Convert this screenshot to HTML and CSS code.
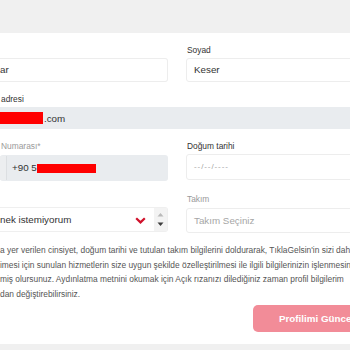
FILE: index.html
```html
<!DOCTYPE html>
<html lang="tr">
<head>
<meta charset="utf-8">
<title>Profil</title>
<link rel="stylesheet" href="styles.css">
</head>
<body>
<div class="topbar"></div>
<main class="form">
  <div class="row">
    <div class="field">
      <label class="lbl">&nbsp;</label>
      <div class="input clip">ar</div>
    </div>
    <div class="field">
      <label class="lbl">Soyad</label>
      <div class="input">Keser</div>
    </div>
  </div>

  <div class="field full">
    <label class="lbl">adresi</label>
    <div class="input disabled email clip"><span class="redact email-redact"></span>.com</div>
  </div>

  <div class="row row-mid">
    <div class="field">
      <label class="lbl muted">Numarası*</label>
      <div class="input disabled phone">
        <span class="prefix"></span>
        <span class="phone-num">+90 5<span class="redact phone-redact"></span></span>
      </div>
    </div>
    <div class="field">
      <label class="lbl">Doğum tarihi</label>
      <div class="input date placeholder">--/--/----</div>
    </div>
  </div>

  <div class="row row-mid">
    <div class="field">
      <label class="lbl">&nbsp;</label>
      <div class="select">
        <span class="select-text">nek istemiyorum</span>
        <svg class="chevron" width="11" height="7" viewBox="0 0 11 7"><path d="M1.2 1.2 L5.5 5.4 L9.8 1.2" fill="none" stroke="#d0112b" stroke-width="2.2"/></svg>
        <span class="spinner">
          <svg width="7" height="5" viewBox="0 0 7 5"><path d="M0.5 4.5 L3.5 1 L6.5 4.5 Z" fill="#b9b9b9"/></svg>
          <svg width="7" height="5" viewBox="0 0 7 5"><path d="M0.5 0.5 L3.5 4 L6.5 0.5 Z" fill="#3d3d3d"/></svg>
        </span>
      </div>
    </div>
    <div class="field">
      <label class="lbl muted">Takım</label>
      <div class="input team placeholder">Takım Seçiniz</div>
    </div>
  </div>

  <p class="note">a yer verilen cinsiyet, doğum tarihi ve tutulan takım bilgilerini doldurarak, TıklaGelsin'in sizi daha<br>imesi için sunulan hizmetlerin size uygun şekilde özelleştirilmesi ile ilgili bilgilerinizin işlenmesine<br>miş olursunuz. Aydınlatma metnini okumak için Açık rızanızı dilediğiniz zaman profil bilgilerim<br>dan değiştirebilirsiniz.</p>

  <div class="actions">
    <button class="btn" type="button">Profilimi Güncelle</button>
  </div>
</main>
<div class="bottombar"></div>
</body>
</html>
```

FILE: styles.css
```css
html, body {
  margin: 0;
  padding: 0;
  width: 350px;
  height: 350px;
  overflow: hidden;
  background: #ffffff;
}
body {
  font-family: "Liberation Sans", Arial, sans-serif;
  color: #333333;
}
.topbar {
  height: 33px;
  background: #f0f0f0;
}
.form {
  width: 388px;
  padding-top: 11px;
}
.row {
  display: grid;
  grid-template-columns: 168px 202px;
  column-gap: 18px;
}
.row-mid {
  margin-top: 11px;
}
.row + .row-mid {
  margin-top: 12px;
}
.field.full {
  margin-top: 11px;
}
.field {
  display: flex;
  flex-direction: column;
}
.lbl {
  display: block;
  font-size: 8.4px;
  line-height: 12px;
  height: 12px;
  color: #333333;
  margin-bottom: 2px;
  padding-left: 1px;
}
.lbl.muted {
  color: #9a9a9a;
}
.input {
  box-sizing: border-box;
  height: 24px;
  border: 1px solid #ededed;
  border-radius: 3px;
  font-size: 9.8px;
  line-height: 22px;
  padding-left: 7px;
  color: #333333;
  white-space: nowrap;
}
.input.clip {
  padding-left: 0;
  border-left: none;
  border-top-left-radius: 0;
  border-bottom-left-radius: 0;
}
.input.disabled {
  background: #e9ecef;
  border-color: #e9ecef;
}
.input.email {
  height: 22px;
  line-height: 21px;
  display: flex;
  align-items: center;
}
.redact {
  display: inline-block;
  background: #ff0000;
}
.email-redact {
  width: 43px;
  height: 12px;
  margin-right: 1px;
}
.input.phone {
  height: 26px;
  padding-left: 0;
  border-left: none;
  display: flex;
  align-items: center;
  margin-top: 1px;
}
.prefix {
  width: 6px;
  height: 100%;
  background: #eceef0;
  border-right: 1px solid #dcdfe2;
}
.phone-num {
  margin-left: 5px;
  display: flex;
  align-items: center;
}
.phone-redact {
  width: 59px;
  height: 9px;
  margin-left: 0;
}
.placeholder {
  color: #a6a6a6;
}
.input.date {
  height: 26px;
  line-height: 24px;
  font-size: 8px;
  letter-spacing: 0.9px;
}
.input.team {
  height: 25px;
  line-height: 23px;
  margin-top: 1px;
}
.select {
  box-sizing: border-box;
  height: 25px;
  border: 1px solid #efefef;
  border-left: none;
  border-radius: 0 3px 3px 0;
  display: flex;
  align-items: center;
  font-size: 9.8px;
  color: #333333;
  white-space: nowrap;
}
.select-text {
  flex: 1;
}
.chevron {
  display: block;
  margin-right: 8px;
  margin-top: 1px;
}
.spinner {
  width: 13px;
  height: 100%;
  background: #f3f3f3;
  display: flex;
  flex-direction: column;
  align-items: center;
  justify-content: space-around;
  padding: 2px 0;
  box-sizing: border-box;
}
.spinner svg {
  display: block;
}
.note {
  margin: 10px 0 0 0;
  font-size: 8.4px;
  line-height: 14.7px;
  color: #555555;
  white-space: nowrap;
}
.actions {
  display: flex;
  justify-content: flex-end;
  margin-top: 3px;
}
.btn {
  height: 27px;
  width: 135px;
  border: none;
  border-radius: 5px;
  background: #f28c98;
  color: #ffffff;
  font-family: "Liberation Sans", Arial, sans-serif;
  font-weight: bold;
  font-size: 9.8px;
  text-align: left;
  padding: 0 0 0 26px;
}
.bottombar {
  margin-top: 12px;
  height: 10px;
  background: #f0f0f0;
}
```
